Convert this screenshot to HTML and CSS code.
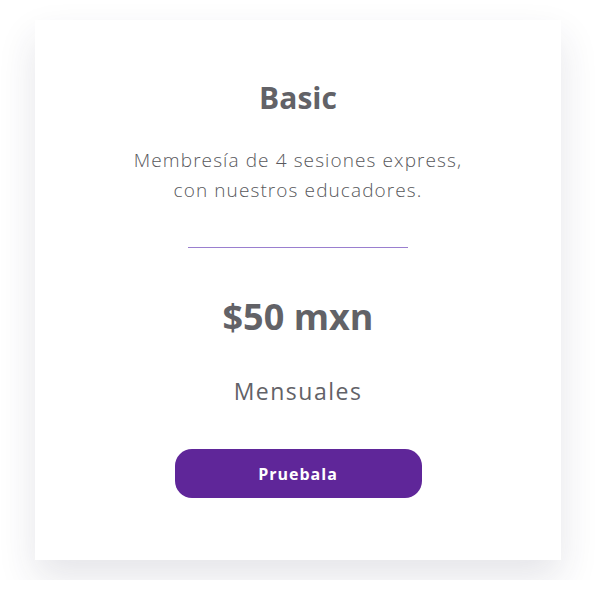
FILE: index.html
```html
<!DOCTYPE html>
<html lang="es">
<head>
<meta charset="utf-8">
<link rel="stylesheet" href="styles.css">
</head>
<body>
<div class="page">
  <div class="card">
    <h2 class="title">Basic</h2>
    <p class="desc">Membresía de 4 sesiones express,<br>con nuestros educadores.</p>
    <div class="divider"></div>
    <div class="price">$50 mxn</div>
    <div class="period">Mensuales</div>
    <button class="btn">Pruebala</button>
  </div>
</div>
</body>
</html>
```
FILE: styles.css
```css
html, body {
  margin: 0;
  padding: 0;
  background: #ffffff;
}
.page {
  padding: 20px 35px;
  display: flex;
}
.card {
  width: 526px;
  height: 540px;
  box-sizing: border-box;
  background: #fff;
  box-shadow: 0 18px 36px rgba(40, 40, 70, 0.12);
  display: flex;
  flex-direction: column;
  align-items: center;
  padding-top: 58px;
}
.title {
  margin: 0;
  font-family: "Open Sans", sans-serif;
  font-weight: 700;
  font-size: 30px;
  line-height: 40px;
  color: #626267;
}
.desc {
  margin: 27px 0 0;
  font-family: "Open Sans", sans-serif;
  font-weight: 300;
  font-size: 19px;
  letter-spacing: 1.1px;
  line-height: 30px;
  color: #58585c;
  text-align: center;
}
.divider {
  width: 220px;
  height: 1px;
  background: #9a7fcf;
  margin-top: 42px;
}
.price {
  margin-top: 47px;
  font-family: "Open Sans", sans-serif;
  font-weight: 700;
  font-size: 36px;
  line-height: 44px;
  color: #626267;
}
.period {
  margin-top: 37px;
  font-family: "Open Sans", sans-serif;
  font-weight: 500;
  font-size: 23px;
  letter-spacing: 1.5px;
  line-height: 30px;
  color: #626267;
}
.btn {
  margin-top: 43px;
  width: 247px;
  height: 49px;
  border: 0;
  border-radius: 17px;
  background: #5f2699;
  color: #fff;
  font-family: "Open Sans", sans-serif;
  font-weight: 700;
  font-size: 16px;
  letter-spacing: 1px;
  cursor: pointer;
}
```
